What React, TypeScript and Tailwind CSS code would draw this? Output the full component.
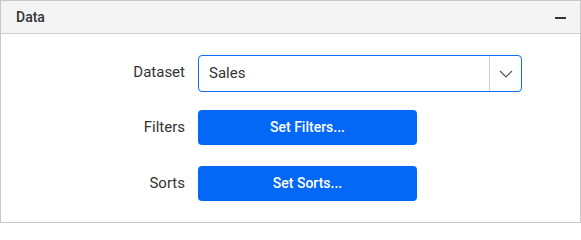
import React from "react";

export default function App() {
  return (
    <div className="w-[581px] h-[223px] bg-white border border-[#c8c8c8] flex flex-col" style={{ fontFamily: "Roboto, 'Liberation Sans', sans-serif" }}>
      <div className="h-[33px] shrink-0 bg-[#f4f4f4] border-b border-[#cfcfcf] flex items-center justify-between pl-[15px] pr-[14px]">
        <span className="text-[14px] font-medium text-[#333]">Data</span>
        <span className="w-[11px] h-[2px] bg-[#333] mt-[1px]"></span>
      </div>
      <div className="flex-1 pt-[21px]">
        <div className="flex items-center h-[37px]">
          <div className="w-[197px] pr-[13px] text-right text-[15px] text-[#333] shrink-0 -mt-[3px]">Dataset</div>
          <div className="w-[324px] h-[37px] border border-[#0d6efd] rounded-[4px] flex items-center">
            <div className="flex-1 pl-[10px] text-[15px] text-[#333]">Sales</div>
            <div className="w-px h-[35px] bg-[#cfcfcf]"></div>
            <div className="w-[31px] flex items-center justify-center">
              <svg width="14" height="8" viewBox="0 0 14 8" fill="none">
                <path d="M1 1l6 6 6-6" stroke="#555" strokeWidth="1.2" />
              </svg>
            </div>
          </div>
        </div>
        <div className="flex items-center h-[35px] mt-[18px]">
          <div className="w-[197px] pr-[13px] text-right text-[15px] text-[#333] shrink-0">Filters</div>
          <button className="w-[219px] h-[35px] rounded-[4px] bg-[#0468f7] text-white text-[14px] font-medium">Set Filters...</button>
        </div>
        <div className="flex items-center h-[35px] mt-[21px]">
          <div className="w-[197px] pr-[13px] text-right text-[15px] text-[#333] shrink-0">Sorts</div>
          <button className="w-[219px] h-[35px] rounded-[4px] bg-[#0468f7] text-white text-[14px] font-medium">Set Sorts...</button>
        </div>
      </div>
    </div>
  );
}
